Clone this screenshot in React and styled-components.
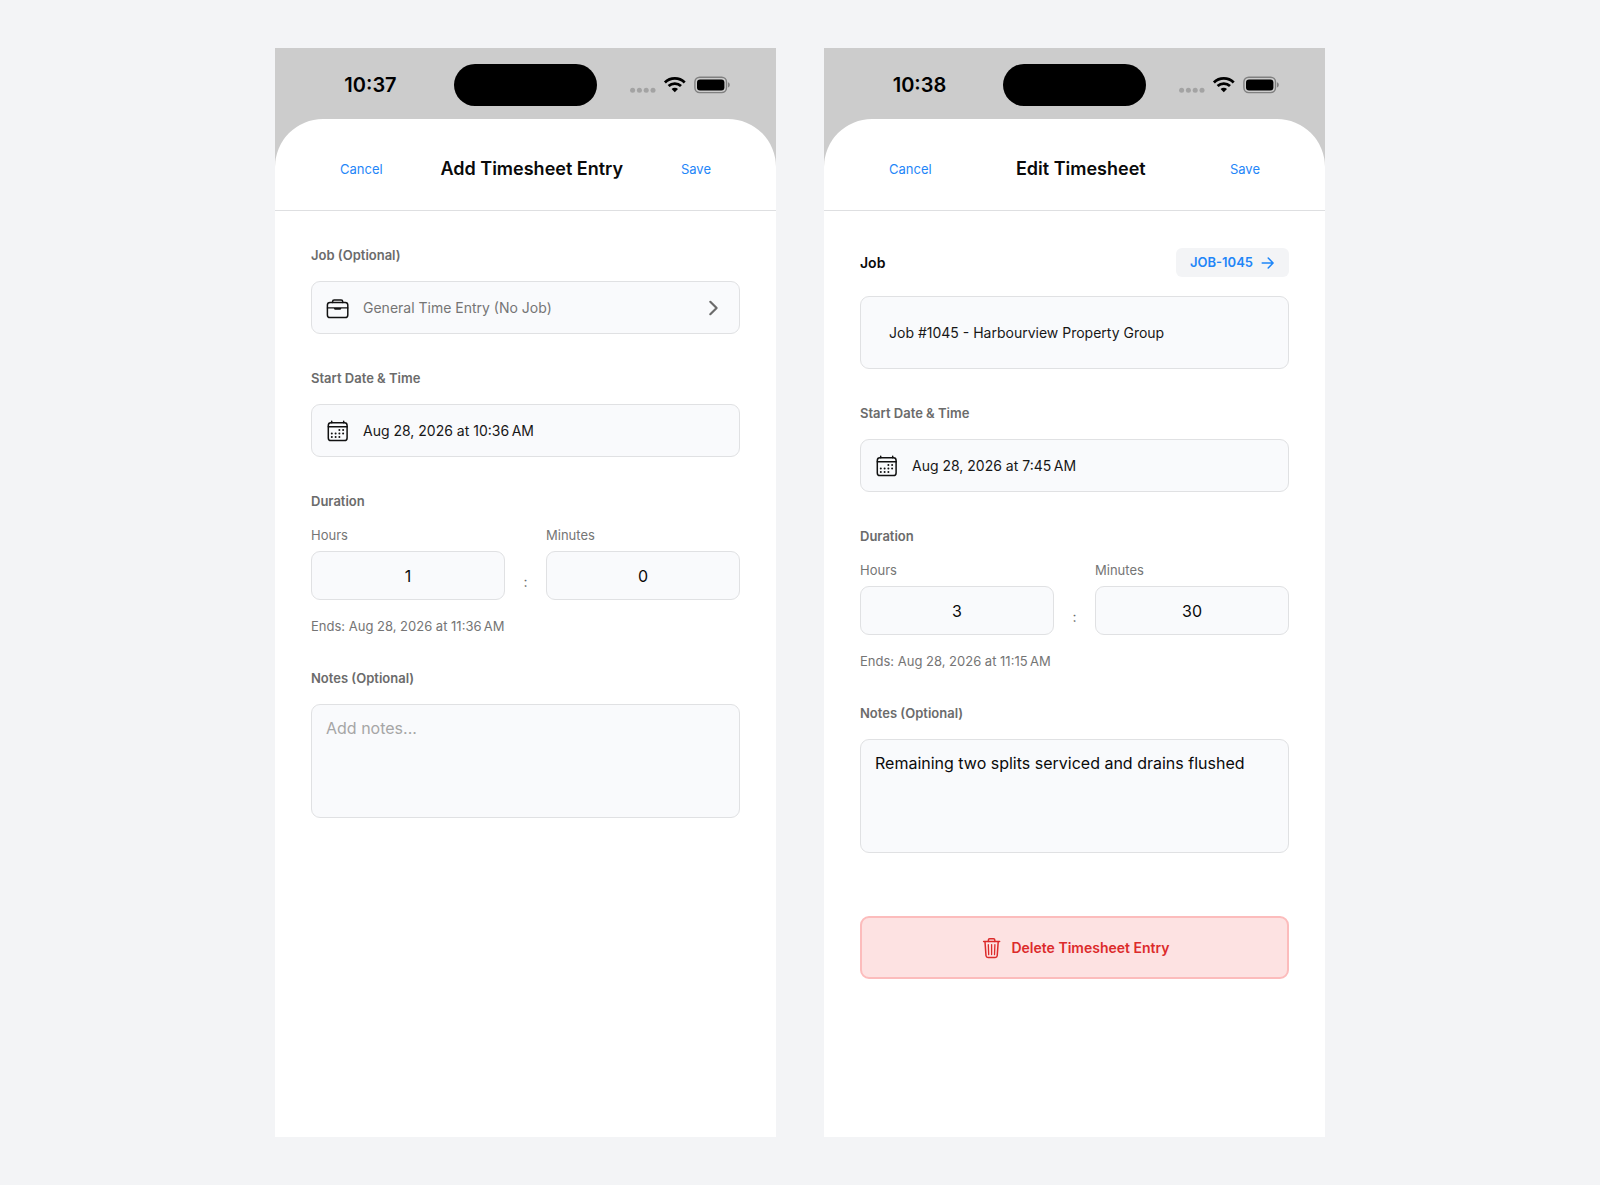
import React, { useState } from 'react';
import styled, { createGlobalStyle } from 'styled-components';

const App = () => {
    return (
        <>
            <GlobalStyle />
            <Page>
                <TimesheetScreen
                    id="add"
                    time="10:37"
                    title="Add Timesheet Entry"
                    start={'Aug 28, 2026 at 10:36\u2009AM'}
                    ends={'Aug 28, 2026 at 11:36\u2009AM'}
                    initialHours="1"
                    initialMinutes="0"
                    initialNotes=""
                />
                <TimesheetScreen
                    id="edit"
                    time="10:38"
                    title="Edit Timesheet"
                    job={{ code: 'JOB-1045', name: 'Job #1045 - Harbourview Property Group' }}
                    start={'Aug 28, 2026 at 7:45\u2009AM'}
                    ends={'Aug 28, 2026 at 11:15\u2009AM'}
                    initialHours="3"
                    initialMinutes="30"
                    initialNotes="Remaining two splits serviced and drains flushed"
                />
            </Page>
        </>
    )
}
export default App;

const TimesheetScreen = ({ id, time, title, job, start, ends, initialHours, initialMinutes, initialNotes }) => {
    const [hours, setHours] = useState(initialHours);
    const [minutes, setMinutes] = useState(initialMinutes);
    const [notes, setNotes] = useState(initialNotes);

    return (
        <Phone>
            <StatusBar>
                <Clock>{time}</Clock>
                <Island />
                <StatusIcons />
            </StatusBar>
            <Sheet>
                <SheetHeader>
                    <HeaderButton type="button">Cancel</HeaderButton>
                    <Title>{title}</Title>
                    <HeaderButton type="button">Save</HeaderButton>
                </SheetHeader>
                <Form onSubmit={(e) => e.preventDefault()}>
                    {job ? (
                        <Section>
                            <JobRow>
                                <JobHeading>Job</JobHeading>
                                <JobLink href="#job">
                                    {job.code}
                                    <ArrowIcon />
                                </JobLink>
                            </JobRow>
                            <JobCard>{job.name}</JobCard>
                        </Section>
                    ) : (
                        <Section>
                            <Label htmlFor={`${id}-job`}>Job (Optional)</Label>
                            <PickerButton type="button" id={`${id}-job`} $muted>
                                <BriefcaseIcon />
                                <PickerText>General Time Entry (No Job)</PickerText>
                                <ChevronIcon />
                            </PickerButton>
                        </Section>
                    )}

                    <Section>
                        <Label htmlFor={`${id}-start`}>Start Date &amp; Time</Label>
                        <PickerButton type="button" id={`${id}-start`}>
                            <CalendarIcon />
                            <PickerText>{start}</PickerText>
                        </PickerButton>
                    </Section>

                    <Section>
                        <GroupLabel>Duration</GroupLabel>
                        <DurationRow>
                            <DurationField>
                                <SmallLabel htmlFor={`${id}-hours`}>Hours</SmallLabel>
                                <NumberInput
                                    id={`${id}-hours`}
                                    inputMode="numeric"
                                    value={hours}
                                    onChange={(e) => setHours(e.target.value)}
                                />
                            </DurationField>
                            <Colon>:</Colon>
                            <DurationField>
                                <SmallLabel htmlFor={`${id}-minutes`}>Minutes</SmallLabel>
                                <NumberInput
                                    id={`${id}-minutes`}
                                    inputMode="numeric"
                                    value={minutes}
                                    onChange={(e) => setMinutes(e.target.value)}
                                />
                            </DurationField>
                        </DurationRow>
                        <EndsText>Ends: {ends}</EndsText>
                    </Section>

                    <Section>
                        <Label htmlFor={`${id}-notes`}>Notes (Optional)</Label>
                        <NotesInput
                            id={`${id}-notes`}
                            placeholder="Add notes..."
                            value={notes}
                            onChange={(e) => setNotes(e.target.value)}
                        />
                    </Section>

                    {job && (
                        <DeleteButton type="button">
                            <TrashIcon />
                            Delete Timesheet Entry
                        </DeleteButton>
                    )}
                </Form>
            </Sheet>
        </Phone>
    )
}

/* icons */

const StatusIcons = () => (
    <StatusSvg width="102" height="20" viewBox="0 0 102 20" aria-hidden="true">
        <g fill="#a3a3a3">
            <circle cx="2.6" cy="15.3" r="2.5" />
            <circle cx="9.4" cy="15.3" r="2.5" />
            <circle cx="16.2" cy="15.3" r="2.5" />
            <circle cx="23" cy="15.3" r="2.5" />
        </g>
        <g fill="none" stroke="#000" strokeWidth="2.8">
            <path d="M34.9 7.4a14.2 14.2 0 0 1 19.8 0" />
            <path d="M38.600 11.1a9 9 0 0 1 12.4 0" />
        </g>
        <path d="M44.8 17.2l-3.2-3.2a4.6 4.6 0 0 1 6.4 0z" fill="#000" />
        <rect x="64.9" y="2.2" width="31.6" height="15.4" rx="4.8" fill="none" stroke="#808080" strokeWidth="1.4" />
        <rect x="67" y="4.4" width="27.4" height="11" rx="3" fill="#000" />
        <path d="M98 7.300c2.400.8 2.400 4.400 0 5.200z" fill="#808080" />
    </StatusSvg>
)

const BriefcaseIcon = () => (
    <Icon viewBox="0 0 24 24" $color="#111" aria-hidden="true">
        <rect x="1.4" y="6.5" width="20.4" height="15.1" rx="2.6" />
        <path d="M6.6 6.4V5.6c0-.9.7-1.6 1.6-1.6h6.9c.9 0 1.6.7 1.6 1.6v.8" />
        <path d="M1.4 11.9h20.4" strokeWidth="1.2" />
        <path d="M7.9 12h7.4c0 1.2-.6 1.8-1.6 1.8H9.5c-1 0-1.6-.6-1.6-1.8z" fill="currentColor" stroke="none" />
    </Icon>
)

const CalendarIcon = () => (
    <Icon viewBox="0 0 24 24" $color="#111" aria-hidden="true">
        <rect x="2.3" y="3.8" width="18.8" height="17.8" rx="2.6" />
        <path d="M2.3 7.7h18.8" />
        <path d="M5.7 2.2v1.6M17.7 2.2v1.6" />
        <g fill="currentColor" stroke="none">
            {[[13.4, 11], [17.1, 11], [5.8, 14.5], [9.6, 14.5], [13.4, 14.5], [17.1, 14.5], [5.8, 18], [9.6, 18], [13.4, 18]].map(([x, y]) => (
                <circle key={`${x}-${y}`} cx={x} cy={y} r="1" />
            ))}
        </g>
    </Icon>
)

const ChevronIcon = () => (
    <Icon viewBox="0 0 24 24" $color="#6b6b6b" aria-hidden="true">
        <path d="M9.3 5.8l6.3 6.2-6.3 6.2" strokeWidth="2.2" />
    </Icon>
)

const ArrowIcon = () => (
    <SmallIcon viewBox="0 0 14 14" $color="#1f86f8" aria-hidden="true">
        <path d="M1.2 7h10.800M7.200 2l4.900 5-4.900 5" />
    </SmallIcon>
)

const TrashIcon = () => (
    <Icon viewBox="0 0 24 24" $color="#dc2b2b" aria-hidden="true">
        <path d="M4.6 5.6h16" />
        <path d="M9.4 5.4V4c0-.8.6-1.3 1.3-1.3h3.800c.8 0 1.300.5 1.300 1.300v1.400" />
        <path d="M6 5.8l1 14c.1 1.1.9 1.8 2 1.8h7.2c1.1 0 1.9-.7 2-1.8l1-14" />
        <path d="M9.300 8.600l.4 10M12.600 8.600v10M15.900 8.600l-.4 10" strokeWidth="1.300" />
    </Icon>
)

/* styles */

const GlobalStyle = createGlobalStyle`
    * {
        box-sizing: border-box;
    }
    body {
        margin: 0;
        background: #f3f4f6;
        font-family: Inter, "Liberation Sans", sans-serif;
    }
    button, input, textarea {
        font-family: inherit;
        margin: 0;
    }
`;

const Page = styled.main`
    display: flex;
    justify-content: center;
    gap: 48px;
    min-height: 100vh;
    padding: 48px;
`;

const Phone = styled.article`
    display: flex;
    flex-direction: column;
    flex: 1;
    max-width: 501px;
    background: #ccc;
`;

const StatusBar = styled.div`
    display: grid;
    grid-template-columns: 1fr auto 1fr;
    align-items: center;
    justify-items: center;
    padding: 16px 12px 13px;
`;

const Clock = styled.span`
    font-size: 20px;
    font-weight: 600;
    line-height: 24px;
    color: #000;
`;

const Island = styled.div`
    width: 143px;
    height: 42px;
    border-radius: 21px;
    background: #000;
`;

const StatusSvg = styled.svg`
    display: block;
`;

const Sheet = styled.section`
    flex: 1;
    background: #fff;
    border-radius: 48px 48px 0 0;
`;

const SheetHeader = styled.header`
    display: flex;
    align-items: center;
    justify-content: space-between;
    padding: 38px 65px 29px;
    border-bottom: 1px solid #dedfe1;
`;

const Title = styled.h1`
    margin: 0;
    font-size: 18px;
    font-weight: 600;
    line-height: 24px;
    color: #0a0a0a;
`;

const HeaderButton = styled.button`
    padding: 0;
    border: none;
    background: transparent;
    font-size: 13px;
    line-height: 16px;
    color: #1f86f8;
    cursor: pointer;
`;

const Form = styled.form`
    display: flex;
    flex-direction: column;
    gap: 36px;
    padding: 36px;
`;

const Section = styled.div`
    display: flex;
    flex-direction: column;
    gap: 18px;
`;

const Label = styled.label`
    font-size: 13px;
    font-weight: 600;
    line-height: 16px;
    color: #6b6b6b;
`;

const GroupLabel = styled.span`
    font-size: 13px;
    font-weight: 600;
    line-height: 16px;
    color: #6b6b6b;
`;

const SmallLabel = styled.label`
    font-size: 13px;
    line-height: 16px;
    color: #757575;
`;

const JobRow = styled.div`
    display: flex;
    align-items: center;
    justify-content: space-between;
    height: 31px;
`;

const JobHeading = styled.h2`
    margin: 0;
    font-size: 14px;
    font-weight: 600;
    line-height: 16px;
    color: #0a0a0a;
`;

const JobLink = styled.a`
    display: flex;
    align-items: center;
    gap: 8px;
    padding: 6px 14px;
    border-radius: 6px;
    background: #f3f4f6;
    font-size: 13px;
    font-weight: 600;
    line-height: 17px;
    color: #1f86f8;
    text-decoration: none;
`;

const JobCard = styled.div`
    padding: 27px 28px;
    border: 1px solid #e0e1e3;
    border-radius: 9px;
    background: #f9fafc;
    font-size: 14px;
    line-height: 17px;
    color: #171717;
`;

const PickerButton = styled.button`
    display: flex;
    align-items: center;
    gap: 13px;
    height: 53px;
    padding: 0 14px;
    border: 1px solid #e0e1e3;
    border-radius: 9px;
    background: #f9fafc;
    font-size: 14px;
    text-align: left;
    color: ${({ $muted }) => ($muted ? '#757575' : '#171717')};
    cursor: pointer;
`;

const PickerText = styled.span`
    flex: 1;
`;

const DurationRow = styled.div`
    display: flex;
    align-items: flex-end;
`;

const DurationField = styled.div`
    display: flex;
    flex: 1;
    flex-direction: column;
    gap: 8px;
    min-width: 0;
`;

const NumberInput = styled.input`
    width: 100%;
    height: 49px;
    padding: 0 14px;
    border: 1px solid #e0e1e3;
    border-radius: 9px;
    background: #f9fafc;
    font-size: 16px;
    text-align: center;
    color: #0a0a0a;
`;

const Colon = styled.span`
    width: 41px;
    padding-bottom: 10px;
    font-size: 14px;
    line-height: 16px;
    text-align: center;
    color: #6b6b6b;
`;

const EndsText = styled.p`
    margin: 0;
    font-size: 13px;
    line-height: 16px;
    color: #757575;
`;

const NotesInput = styled.textarea`
    height: 114px;
    padding: 13px 14px;
    border: 1px solid #e0e1e3;
    border-radius: 9px;
    background: #f9fafc;
    font-size: 16px;
    line-height: 20px;
    color: #0a0a0a;
    resize: none;

    &::placeholder {
        color: #a6a6a6;
    }
`;

const DeleteButton = styled.button`
    display: flex;
    align-items: center;
    justify-content: center;
    gap: 8px;
    height: 63px;
    margin-top: 27px;
    border: 2px solid #fcbcbc;
    border-radius: 9px;
    background: #fde2e2;
    font-size: 14px;
    font-weight: 600;
    color: #dc2b2b;
    cursor: pointer;
`;

const Icon = styled.svg`
    flex: none;
    width: 24px;
    height: 24px;
    fill: none;
    stroke: currentColor;
    stroke-width: 1.5;
    stroke-linecap: round;
    stroke-linejoin: round;
    color: ${({ $color }) => $color};
`;

const SmallIcon = styled(Icon)`
    width: 14px;
    height: 14px;
`;
